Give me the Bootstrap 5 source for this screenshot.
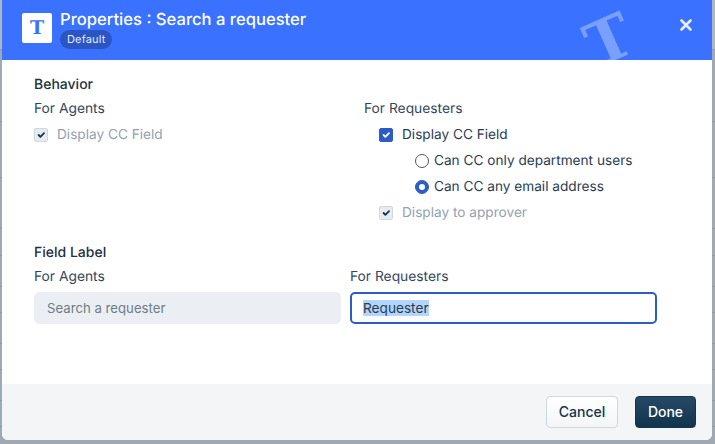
<!DOCTYPE html>
<html lang="en">
<head>
<meta charset="utf-8">
<title>Properties</title>
<link rel="stylesheet" href="https://cdn.jsdelivr.net/npm/bootstrap@5.3.0/dist/css/bootstrap.min.css">
<style>
html,body{height:100%;}
body{background-color:#9fa9b3;background-image:linear-gradient(#909ba6,#909ba6),linear-gradient(#909ba6,#909ba6),linear-gradient(#909ba6,#909ba6),linear-gradient(#909ba6,#909ba6),linear-gradient(#909ba6,#909ba6),linear-gradient(#909ba6,#909ba6),linear-gradient(#909ba6,#909ba6),linear-gradient(#909ba6,#909ba6),linear-gradient(#909ba6,#909ba6),linear-gradient(#909ba6,#909ba6),linear-gradient(#909ba6,#909ba6),linear-gradient(#aeb6be,#aeb6be);background-repeat:no-repeat;background-size:100% 1px,100% 1px,100% 1px,100% 1px,100% 1px,100% 1px,100% 1px,100% 1px,100% 1px,100% 1px,100% 1px,100% 49px;background-position:0 49px,0 121px,0 177px,0 228px,0 255px,0 286px,0 312px,0 343px,0 369px,0 400px,0 426px,0 0;font-family:Inter,"Liberation Sans",sans-serif;font-size:13.65px;color:#2a3c4f;overflow:hidden;text-rendering:geometricPrecision;}
.dlg{width:710px;height:440px;margin-left:2px;border:0;border-radius:0 0 6px 6px;overflow:hidden;background:#fff;}
.dlg-head{height:60px;background:#3a72ff;color:#fff;padding:0 20px;position:relative;overflow:hidden;border:0;border-radius:0;justify-content:flex-start;align-items:flex-start;}
.logo-box{width:30px;height:30px;margin-top:13px;background:#fff;border-radius:2px;color:#3a72ff;font:700 19px/30px "DejaVu Serif",serif;text-align:center;}
.dlg-title{font-size:16.6px;font-weight:500;line-height:20px;margin:10px 0 0 8px;}
.pill{display:inline-block;background:#2b55c4;color:#e4ebfb;font-size:11px;font-weight:400;line-height:19px;height:19px;padding:0 7px;border-radius:10px;letter-spacing:.15px;margin:0;vertical-align:top;}
.water{position:absolute;left:585px;top:11px;font:700 60px/60px "DejaVu Serif",serif;color:rgba(255,255,255,.32);-webkit-text-stroke:1.5px rgba(255,255,255,.01);transform:rotate(-24deg);}
.x-btn{position:absolute;left:676px;top:17px;width:16px;height:16px;padding:0;border:0;background:none;line-height:0;}
.dlg-body{padding:0 32px;height:324px;flex:none;}
.sec{font-size:14px;font-weight:500;color:#23303f;line-height:20px;}
.lbl{line-height:20px;color:#33475b;font-size:13.8px;}
.opt{display:flex;align-items:center;height:26px;margin:0;padding:0;}
.opt .form-check-input{width:14px;height:14px;margin:0;flex:none;}
.form-check-input:checked{background-color:#2c5cc5;border-color:#2c5cc5;}
.form-check-input[type=checkbox]{border-radius:2px;}
.form-check-input:disabled{opacity:1;background-color:#e9ecef;border-color:#cfd7df;background-image:url("data:image/svg+xml,%3csvg xmlns='http://www.w3.org/2000/svg' viewBox='0 0 20 20'%3e%3cpath fill='none' stroke='%2312344d' stroke-linecap='round' stroke-linejoin='round' stroke-width='3' d='m6 10 3 3 6-6'/%3e%3c/svg%3e");}
.form-check-input[type=radio]{border-color:#475867;}
.form-check-input[type=radio]:checked{border-color:#2c5cc5;}
.opt-first{margin-top:3px;}
.off{color:#92a2b1;}
.gap-r1{padding-left:15px;}
.gap-r2{padding-left:51px;}
.gap-r3{padding-left:15px;}
.cbx-t{margin-left:9px;}
.rad-t{margin-left:5px;}
.col-l{width:330px;flex:none;}
.col-f{width:316px;flex:none;}
.fld{width:307px;height:32px;font-size:13.65px;border-radius:5px;padding:0 12px;box-sizing:border-box;}
.fld:disabled{background:#ebeff3;border:1px solid #ebeff3;color:#6f7c87;opacity:1;-webkit-text-fill-color:#6f7c87;font-size:13.2px;}
.fld-on,.fld-on:focus{border:2px solid #2c5cc5;box-shadow:none;color:#2a3c4f;padding:0 11px;}
.fld::selection{background:#b3d4fc;color:#2a3c4f;}
.lbl-f{margin-bottom:5px;}
.sec-f{margin-top:17px;}
.dlg-foot{height:56px;background:#f4f5f7;border:0;border-radius:0;padding:12px 16px;justify-content:flex-end;gap:17px;flex-wrap:nowrap;}
.dlg-foot .btn{margin:0;height:32px;padding:0;font-size:14px;font-weight:500;border-radius:4px;line-height:30px;}
.b-cancel{width:72px;background:linear-gradient(#fff,#f3f5f7);border:1px solid #cfd7df;color:#12344d;}
.b-done{width:61px;background:linear-gradient(#264966,#12344d);border:1px solid #12344d;color:#fff;}
.top-a{padding-top:15px;}
</style>
</head>
<body>
<div class="modal-content dlg d-flex flex-column">
  <div class="modal-header dlg-head">
    <div class="logo-box">T</div>
    <div>
      <div class="dlg-title">Properties : Search a requester</div>
      <div class="ms-2"><span class="pill">Default</span></div>
    </div>
    <span class="water" aria-hidden="true">T</span>
    <button class="x-btn" type="button" aria-label="Close"><svg width="16" height="16" viewBox="0 0 16 16"><path d="M3.500 3.500l9 9M12.500 3.500l-9 9" stroke="#e6edff" stroke-width="2.6" stroke-linecap="round" fill="none"/></svg></button>
  </div>
  <div class="modal-body dlg-body">
    <div class="sec top-a">Behavior</div>
    <div class="d-flex mt-1">
      <div class="col-l">
        <div class="lbl">For Agents</div>
        <label class="opt opt-first"><input class="form-check-input" type="checkbox" checked disabled><span class="cbx-t off">Display CC Field</span></label>
      </div>
      <div>
        <div class="lbl">For Requesters</div>
        <label class="opt opt-first gap-r1"><input class="form-check-input" type="checkbox" checked><span class="cbx-t">Display CC Field</span></label>
        <label class="opt gap-r2"><input class="form-check-input" type="radio" name="cc"><span class="rad-t">Can CC only department users</span></label>
        <label class="opt gap-r2"><input class="form-check-input" type="radio" name="cc" checked><span class="rad-t">Can CC any email address</span></label>
        <label class="opt gap-r3"><input class="form-check-input" type="checkbox" checked disabled><span class="cbx-t off">Display to approver</span></label>
      </div>
    </div>
    <div class="sec sec-f">Field Label</div>
    <div class="d-flex mt-1">
      <div class="col-f">
        <div class="lbl lbl-f">For Agents</div>
        <input class="form-control fld" type="text" value="Search a requester" disabled>
      </div>
      <div class="col-f">
        <div class="lbl lbl-f">For Requesters</div>
        <input id="req" class="form-control fld fld-on" type="text" value="Requester">
      </div>
    </div>
  </div>
  <div class="modal-footer dlg-foot">
    <button type="button" class="btn b-cancel">Cancel</button>
    <button type="button" class="btn b-done">Done</button>
  </div>
</div>
<script src="https://cdn.jsdelivr.net/npm/bootstrap@5.3.0/dist/js/bootstrap.bundle.min.js"></script>
<script>var r=document.getElementById('req');r.focus();r.select();</script>
</body>
</html>
